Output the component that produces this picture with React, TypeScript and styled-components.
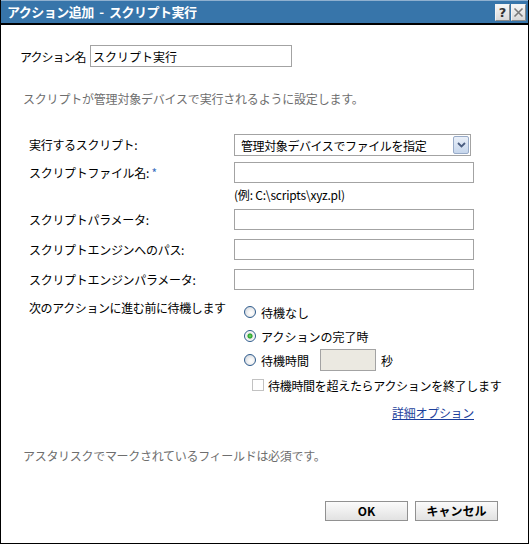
import styled, { createGlobalStyle } from "styled-components";

const GlobalStyle = createGlobalStyle`
  html, body {
    margin: 0;
    padding: 0;
    background: #fff;
  }
  body {
    font-family: "Noto Sans CJK JP", "Noto Sans", sans-serif;
    font-size: 12px;
    color: #000;
  }
`;

const scriptFields = [
  { label: "スクリプトパラメータ:", top: 7 },
  { label: "スクリプトエンジンへのパス:", top: 9 },
  { label: "スクリプトエンジンパラメータ:", top: 9 },
];

const waitOptions = [
  { label: "待機なし", checked: false },
  { label: "アクションの完了時", checked: true },
];

function ChevronIcon() {
  return (
    <svg width="9" height="6" viewBox="0 0 9 6" aria-hidden="true">
      <path d="M1 1l3.5 3.5L8 1" fill="none" stroke="#4a5d80" strokeWidth="1.8" />
    </svg>
  );
}

function CloseIcon() {
  return (
    <svg width="11" height="11" viewBox="0 0 11 11" aria-hidden="true">
      <path d="M1.5 1.5l8 8M9.5 1.5l-8 8" stroke="#7a7a7a" strokeWidth="1.6" />
    </svg>
  );
}

export default function App() {
  return (
    <>
      <GlobalStyle />
      <Dialog>
        <TitleBar>
          <Title>アクション追加 - スクリプト実行</Title>
          <TitleButtons>
            <TitleButton aria-label="ヘルプ">?</TitleButton>
            <TitleButton aria-label="閉じる">
              <CloseIcon />
            </TitleButton>
          </TitleButtons>
        </TitleBar>

        <Body>
          <NameRow>
            <NameLabel>アクション名</NameLabel>
            <TextBox $width={202} $height={22} defaultValue="スクリプト実行" />
          </NameRow>

          <Description>スクリプトが管理対象デバイスで実行されるように設定します。</Description>

          <Form>
            <FieldRow $top={0}>
              <FieldLabel>実行するスクリプト:</FieldLabel>
              <Select>
                <SelectText>管理対象デバイスでファイルを指定</SelectText>
                <SelectArrow>
                  <ChevronIcon />
                </SelectArrow>
              </Select>
            </FieldRow>

            <FieldRow $top={6}>
              <FieldLabel>
                スクリプトファイル名: <Required>*</Required>
              </FieldLabel>
              <FieldStack>
                <TextBox $width={240} $height={21} />
                <Hint>(例: C:\scripts\xyz.pl)</Hint>
              </FieldStack>
            </FieldRow>

            {scriptFields.map((field) => (
              <FieldRow key={field.label} $top={field.top}>
                <FieldLabel>{field.label}</FieldLabel>
                <TextBox $width={240} $height={21} />
              </FieldRow>
            ))}

            <FieldRow $top={10}>
              <WaitLabel>次のアクションに進む前に待機します</WaitLabel>
              <FieldStack>
                <RadioGroup>
                  {waitOptions.map((option) => (
                    <OptionRow key={option.label}>
                      <Radio $checked={option.checked} />
                      <span>{option.label}</span>
                    </OptionRow>
                  ))}
                  <OptionRow>
                    <Radio $checked={false} />
                    <span>待機時間</span>
                    <SecondsBox disabled />
                    <span>秒</span>
                  </OptionRow>
                </RadioGroup>
                <CheckRow>
                  <CheckBox />
                  <span>待機時間を超えたらアクションを終了します</span>
                </CheckRow>
                <AdvancedLink href="#">詳細オプション</AdvancedLink>
              </FieldStack>
            </FieldRow>
          </Form>

          <RequiredNote>アスタリスクでマークされているフィールドは必須です。</RequiredNote>

          <ButtonBar>
            <DialogButton>OK</DialogButton>
            <DialogButton>キャンセル</DialogButton>
          </ButtonBar>
        </Body>
      </Dialog>
    </>
  );
}

const Dialog = styled.div`
  box-sizing: border-box;
  display: flex;
  flex-direction: column;
  width: 529px;
  height: 544px;
  border: 1px solid #000;
  border-top: none;
  background: #fff;
`;

const TitleBar = styled.div`
  display: flex;
  align-items: center;
  justify-content: space-between;
  height: 23px;
  padding: 0 2px 0 6px;
  border-bottom: 2px solid #000;
  background: #3775aa;
  box-shadow: inset 0 1px 0 #8fb0cf;
`;

const Title = styled.div`
  color: #fff;
  font-size: 13px;
  font-weight: bold;
  letter-spacing: -0.5px;
  word-spacing: 3px;
  white-space: nowrap;
`;

const TitleButtons = styled.div`
  display: flex;
  gap: 1px;
  padding-top: 1px;
`;

const TitleButton = styled.div`
  box-sizing: border-box;
  display: grid;
  place-items: center;
  width: 15px;
  height: 17px;
  border: 1px solid #f4f4f4;
  border-right-color: #8a8a8a;
  border-bottom-color: #8a8a8a;
  background: linear-gradient(#f6f6f6, #d9d9d9);
  color: #333;
  font-family: "DejaVu Sans", sans-serif;
  font-size: 13px;
  font-weight: bold;
  line-height: 1;
`;

const Body = styled.div`
  display: flex;
  flex: 1;
  flex-direction: column;
  padding: 20px 30px 0 19px;
`;

const NameRow = styled.div`
  display: flex;
  align-items: center;
`;

const NameLabel = styled.span`
  width: 70px;
  letter-spacing: -1px;
  white-space: nowrap;
`;

const TextBox = styled.input<{ $width: number; $height: number }>`
  box-sizing: border-box;
  width: ${({ $width }) => $width}px;
  height: ${({ $height }) => $height}px;
  margin: 0;
  padding: 0 2px;
  border: 1px solid #a3a3a3;
  background: #fff;
  color: #000;
  font-family: inherit;
  font-size: 12px;
  outline: none;
`;

const Description = styled.p`
  margin: 24px 0 0 3px;
  color: #6e6e6e;
  line-height: 16px;
  letter-spacing: -0.2px;
`;

const Form = styled.div`
  display: flex;
  flex-direction: column;
  margin-top: 27px;
  padding-left: 9px;
`;

const FieldRow = styled.div<{ $top: number }>`
  display: grid;
  grid-template-columns: 205px 240px;
  align-items: start;
  margin-top: ${({ $top }) => $top}px;
`;

const FieldLabel = styled.span`
  line-height: 21px;
  letter-spacing: -0.3px;
  white-space: nowrap;
`;

const WaitLabel = styled.span`
  line-height: 15px;
  letter-spacing: -0.4px;
  white-space: nowrap;
`;

const Required = styled.span`
  color: #3b6fc0;
`;

const FieldStack = styled.div`
  display: flex;
  flex-direction: column;
`;

const Hint = styled.span`
  margin-top: 4px;
  line-height: 15px;
  letter-spacing: -0.2px;
`;

const Select = styled.div`
  box-sizing: border-box;
  display: flex;
  align-items: center;
  justify-content: space-between;
  width: 237px;
  height: 22px;
  padding: 0 1px 0 6px;
  border: 1px solid #a3a3a3;
`;

const SelectText = styled.span`
  letter-spacing: -0.4px;
  white-space: nowrap;
`;

const SelectArrow = styled.span`
  box-sizing: border-box;
  display: grid;
  place-items: center;
  width: 16px;
  height: 18px;
  border: 1px solid #98abc8;
  border-radius: 2px;
  background: linear-gradient(#eaf0f9, #c6d6ec);
`;

const RadioGroup = styled.div`
  display: flex;
  flex-direction: column;
  padding-left: 10px;
`;

const OptionRow = styled.div`
  display: flex;
  align-items: center;
  gap: 5px;
  height: 24px;
  white-space: nowrap;
`;

const Radio = styled.span<{ $checked: boolean }>`
  box-sizing: border-box;
  width: 12px;
  height: 12px;
  flex-shrink: 0;
  border: 1px solid #2e5b8c;
  border-radius: 50%;
  background: ${({ $checked }) =>
    $checked
      ? "radial-gradient(circle, #7be07b 0, #22a022 2px, #e8e8e8 3px, #fff 5px)"
      : "radial-gradient(circle at 60% 60%, #fff 0, #f2f2f2 3px, #d8dde4 6px)"};
`;

const SecondsBox = styled.input`
  box-sizing: border-box;
  width: 56px;
  height: 22px;
  margin: 0 0 0 6px;
  border: 1px solid #a3a3a3;
  background: #ebe9e1;
`;

const CheckRow = styled.div`
  display: flex;
  align-items: center;
  gap: 4px;
  height: 26px;
  padding-left: 18px;
  white-space: nowrap;
  letter-spacing: -0.3px;
`;

const CheckBox = styled.span`
  box-sizing: border-box;
  width: 12px;
  height: 12px;
  flex-shrink: 0;
  border: 1px solid #c2c2c2;
  background: #fff;
`;

const AdvancedLink = styled.a`
  align-self: flex-end;
  margin-top: 7px;
  color: #1c3f9c;
  line-height: 16px;
  letter-spacing: -0.3px;
  text-decoration: underline;
`;

const RequiredNote = styled.p`
  margin: 27px 0 0 3px;
  color: #6e6e6e;
  line-height: 16px;
  letter-spacing: -0.3px;
`;

const ButtonBar = styled.div`
  display: flex;
  justify-content: flex-end;
  gap: 7px;
  margin-top: 37px;
`;

const DialogButton = styled.button`
  box-sizing: border-box;
  width: 83px;
  height: 20px;
  padding: 0;
  border: 1px solid #919191;
  background: linear-gradient(#fbfbfb, #e2e2e2);
  color: #000;
  font-family: "Noto Sans CJK JP", sans-serif;
  font-size: 12px;
  font-weight: bold;
  line-height: 18px;
`;
